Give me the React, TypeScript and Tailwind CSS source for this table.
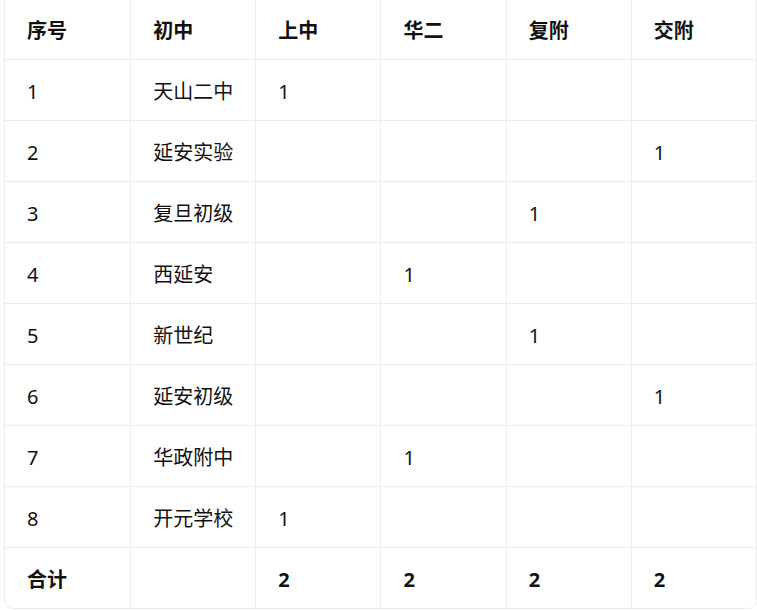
const headers = ["序号", "初中", "上中", "华二", "复附", "交附"];

const rows: string[][] = [
  ["1", "天山二中", "1", "", "", ""],
  ["2", "延安实验", "", "", "", "1"],
  ["3", "复旦初级", "", "", "1", ""],
  ["4", "西延安", "", "1", "", ""],
  ["5", "新世纪", "", "", "1", ""],
  ["6", "延安初级", "", "", "", "1"],
  ["7", "华政附中", "", "1", "", ""],
  ["8", "开元学校", "1", "", "", ""],
];

const totals = ["合计", "", "2", "2", "2", "2"];

const Row = ({
  cells,
  bold,
  className,
}: {
  cells: string[];
  bold?: boolean;
  className: string;
}) => (
  <div className={`grid grid-cols-6 ${className}`}>
    {cells.map((c, i) => (
      <div
        key={i}
        className={`flex items-center pl-[22px] pt-[3px] ${
          i > 0 ? "border-l border-[#ececec]" : ""
        } ${bold ? "font-bold" : "font-normal"}`}
      >
        {c}
      </div>
    ))}
  </div>
);

export default function App() {
  return (
    <div className="min-h-[610px] bg-white pl-[4px] font-['Noto_Sans','Noto_Sans_CJK_SC',sans-serif] text-[20px] text-[#111]">
      <div className="rounded-b-[9px] border-x border-b border-[#ececec] bg-white">
        <Row cells={headers} bold className="h-[60px] border-b border-[#ececec]" />
        {rows.map((r) => (
          <Row key={r[0]} cells={r} className="h-[61px] border-b border-[#ececec]" />
        ))}
        <Row cells={totals} bold className="h-[60px]" />
      </div>
    </div>
  );
}
